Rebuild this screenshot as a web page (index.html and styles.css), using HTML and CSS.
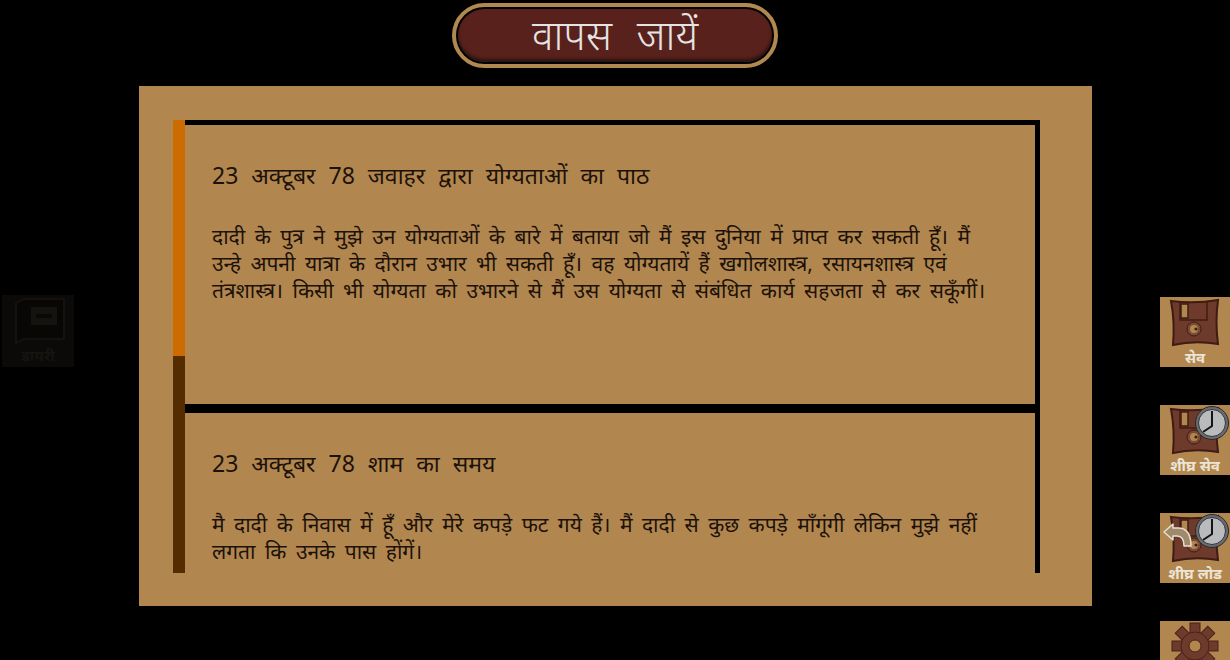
FILE: index.html
```html
<!DOCTYPE html>
<html lang="hi">
<head>
  <meta charset="UTF-8">
  <title>डायरी</title>
  <link rel="stylesheet" href="styles.css">
</head>
<body>
  <div class="page">
    <div class="top">
      <button class="back-btn"><span class="back-inner">वापस जायें</span></button>
    </div>
    <div class="middle">
      <div class="left-side">
        <div class="side-btn dim">
          <svg viewBox="0 0 72 50" width="72" height="50">
            <path d="M14 8 L22 4 H62 V44 H22 L14 48 Z" fill="#080706" stroke="#141210" stroke-width="2"/>
            <rect x="29" y="12" width="26" height="18" fill="#151310"/>
            <rect x="34" y="19" width="16" height="4" fill="#0a0908"/>
          </svg>
          <span>डायरी</span>
        </div>
      </div>
      <div class="panel">
        <div class="scroll-box">
          <div class="scrollbar"><div class="thumb"></div></div>
          <div class="entries">
            <div class="entry">
              <h2>23 अक्टूबर 78 जवाहर द्वारा योग्यताओं का पाठ</h2>
              <p>दादी के पुत्र ने मुझे उन योग्यताओं के बारे में बताया जो मैं इस दुनिया में प्राप्त कर सकती हूँ। मैं उन्हे अपनी यात्रा के दौरान उभार भी सकती हूँ। वह योग्यतायें हैं खगोलशास्त्र, रसायनशास्त्र एवं तंत्रशास्त्र। किसी भी योग्यता को उभारने से मैं उस योग्यता से संबंधित कार्य सहजता से कर सकूँगीं।</p>
            </div>
            <div class="entry">
              <h2>23 अक्टूबर 78 शाम का समय</h2>
              <p>मै दादी के निवास में हूँ और मेरे कपड़े फट गये हैं। मैं दादी से कुछ कपड़े माँगूंगी लेकिन मुझे नहीं लगता कि उनके पास होंगें।</p>
            </div>
          </div>
        </div>
      </div>
      <div class="right-side">
        <div class="side-btn">
          <svg class="icon" viewBox="0 0 70 50" width="70" height="50">
            <use href="#disk"/>
          </svg>
          <span>सेव</span>
        </div>
        <div class="side-btn">
          <svg class="icon" viewBox="0 0 70 50" width="70" height="50">
            <use href="#disk"/>
            <use href="#clock"/>
          </svg>
          <span>शीघ्र सेव</span>
        </div>
        <div class="side-btn">
          <svg class="icon" viewBox="0 0 70 50" width="70" height="50">
            <use href="#disk"/>
            <path d="M4 19 L13 11 V15 H18 Q31 15 31 33 H24 Q24 23 17 23 H13 V27 Z" fill="#a08a6c" stroke="#e7dfd2" stroke-width="1.5" stroke-linejoin="round"/>
            <use href="#clock"/>
          </svg>
          <span>शीघ्र लोड</span>
        </div>
        <div class="side-btn">
          <svg class="icon" viewBox="0 0 70 50" width="70" height="50">
            <g fill="#6d3a2c" stroke="#4b2118" stroke-width="1">
              <rect x="30" y="2" width="10" height="46"/>
              <rect x="12" y="20" width="46" height="10"/>
              <rect x="30" y="2" width="10" height="46" transform="rotate(45 35 25)"/>
              <rect x="30" y="2" width="10" height="46" transform="rotate(-45 35 25)"/>
            </g>
            <circle cx="35" cy="25" r="14" fill="#6d3a2c" stroke="#4b2118"/>
            <circle cx="35" cy="25" r="6" fill="#b1874f" stroke="#4b2118"/>
          </svg>
        </div>
      </div>
    </div>
  </div>

  <svg class="defs" width="0" height="0">
    <defs>
      <g id="disk">
        <path d="M11 4 Q35 7 58 3 Q55 25 58 47 Q35 43 13 48 Q15 25 11 4 Z" fill="#6d3a2c" stroke="#3f1c13" stroke-width="2"/>
        <path d="M20 5 V23 H47 V5" fill="none" stroke="#3f1c13" stroke-width="1.5"/>
        <rect x="21" y="7" width="7" height="14" fill="#b1874f" stroke="#3f1c13" stroke-width="1.5"/>
        <circle cx="34" cy="32" r="7" fill="#7a4a35" stroke="#3f1c13"/>
        <circle cx="34" cy="32" r="4" fill="#b1874f"/>
        <circle cx="36" cy="32" r="1.6" fill="#3f1c13"/>
      </g>
      <g id="clock">
        <circle cx="52" cy="18" r="16.5" fill="#6a6b6e" stroke="#2b2a28"/>
        <circle cx="52" cy="18" r="13.5" fill="#b9bbbc" stroke="#33343a"/>
        <path d="M52 6 V21 L43 27" fill="none" stroke="#141414" stroke-width="2"/>
      </g>
    </defs>
  </svg>
</body>
</html>
```

FILE: styles.css
```css
* {
  box-sizing: border-box;
}
html, body {
  margin: 0;
  height: 100%;
  background: #000;
  overflow: hidden;
}
body {
  font-family: "Noto Sans", "Liberation Sans", sans-serif;
}
.page {
  width: 1230px;
  height: 660px;
  overflow: hidden;
}
.defs {
  display: none;
}

/* top button */
.top {
  display: flex;
  justify-content: center;
  padding-top: 3px;
  height: 86px;
}
.back-btn {
  width: 326px;
  height: 65px;
  padding: 0;
  border: 4px solid #b08850;
  border-radius: 33px;
  background: #000;
  cursor: pointer;
}
.back-inner {
  display: block;
  margin: 2px;
  height: 53px;
  border-radius: 27px;
  background: #59211b;
  box-shadow: inset 0 -3px 3px #2a1512;
  color: #e4e4e4;
  font: 300 41px/50px "Noto Sans", "Liberation Sans", sans-serif;
  word-spacing: 14px;
}

/* middle row */
.middle {
  display: grid;
  grid-template-columns: 139px 953px 138px;
}
.left-side {
  padding: 209px 0 0 2px;
}
.right-side {
  display: flex;
  flex-direction: column;
  align-items: flex-end;
  gap: 38px;
  padding-top: 211px;
}
.side-btn {
  width: 70px;
  height: 70px;
  flex: none;
  background: #b1874f;
  color: #ece4d6;
  font-size: 15px;
  font-weight: 700;
  line-height: 20px;
  text-align: center;
  overflow: hidden;
}
.side-btn svg {
  display: block;
}
.side-btn.dim {
  width: 72px;
  height: 72px;
  background: #0b0a08;
  color: #161410;
}

/* main panel */
.panel {
  height: 520px;
  padding: 34px 52px 33px 34px;
  background: #b1874f;
}
.scroll-box {
  display: flex;
  height: 453px;
  overflow: hidden;
}
.scrollbar {
  width: 12px;
  flex: none;
  background: #552b00;
}
.thumb {
  height: 236px;
  background: #cc6c00;
}
.entries {
  flex: 1;
}
.entry {
  height: 288px;
  padding: 0 35px 0 27px;
  border-top: 5px solid #000;
  border-right: 5px solid #000;
  border-bottom: 4px solid #000;
  color: #1d120a;
}
.entry h2 {
  margin: 0;
  padding-top: 35px;
  font-size: 23px;
  font-weight: 400;
  line-height: 30px;
  word-spacing: 7px;
}
.entry p {
  margin: 33px 0 0;
  font-size: 21px;
  line-height: 27px;
  word-spacing: 4px;
}
```
